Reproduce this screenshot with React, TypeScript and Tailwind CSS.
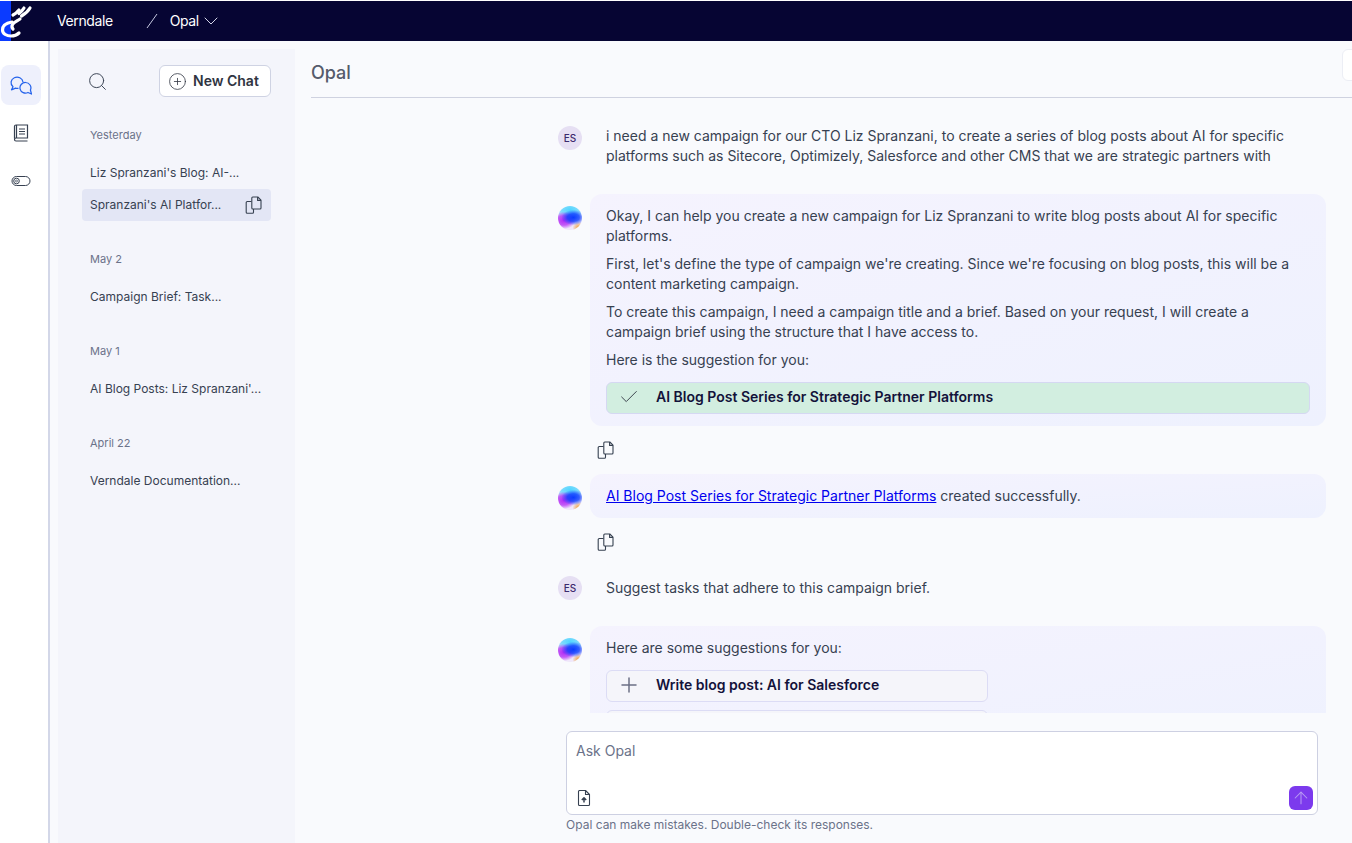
import { ChevronDown, Check, Plus, ArrowUp, Search, CirclePlus } from 'lucide-react';

const CopyIcon = () => (
  <svg width="18" height="18" viewBox="0 0 18 18" fill="none" stroke="#374151" strokeWidth="1.1" strokeLinejoin="round">
    <path d="M6.5 5.5H2.2a1 1 0 0 0-1 1v9.8a1 1 0 0 0 1 1h5.3a1 1 0 0 0 1-1V13" />
    <path d="M6.8 2a1 1 0 0 1 1-1h5l3.2 3.2V12a1 1 0 0 1-1 1H7.8a1 1 0 0 1-1-1z" />
    <path d="M12.6 1v3.4H16" />
  </svg>
);

const ChatsIcon = () => (
  <svg width="22" height="22" viewBox="0 0 22 22" fill="none" stroke="#2563eb" strokeWidth="1.25" strokeLinejoin="round">
    <path d="M13 8A6 5.500 0 1 0 3 12.700L1.500 15.800 5.500 14.200C6.500 14.500 7.500 14.500 8.500 14.400" />
    <path d="M15.500 8.500a5.500 5.300 0 1 0 2.500 10L21.500 20 20.400 16a5.500 5.300 0 0 0-4.900-7.500z" />
  </svg>
);

const BookIcon = () => (
  <svg width="16" height="18" viewBox="0 0 16 18" fill="none" stroke="#374151" strokeWidth="1.2">
    <path d="M1.500 14.500V2.500A1.500 1.500 0 0 1 3 1h11.500v13H3a1.500 1.500 0 0 0-1.500 1.500A1.500 1.500 0 0 0 3 17h11.500" />
    <path d="M3.500 1v13M6 5h6M6 7.500h6M6 10h6" />
  </svg>
);

const ToggleIcon = () => (
  <svg width="20" height="12" viewBox="0 0 20 12" fill="none" stroke="#374151" strokeWidth="1">
    <rect x="1" y="1.500" width="18" height="9" rx="4.500" />
    <circle cx="5.500" cy="6" r="2.800" />
    <circle cx="5.500" cy="6" r="1" strokeWidth="0.700" />
  </svg>
);

const LogoMark = () => (
  <svg width="34" height="38" viewBox="0 0 34 38" fill="none" stroke="#fff" strokeWidth="3.200" strokeLinecap="round">
    <path d="M12 21C6 22 2.500 25 2.500 29c0 4 4.500 6 8.500 6 3 0 6-1 8-3" />
    <path d="M19 9c-1.500 2-4 4-6 5" />
    <path d="M30 7c-2 3.500-5 6-8.500 8" />
    <path d="M24 7c-1.500 2.500-3 4-5 5.500" />
    <path d="M20 18c-3 2-6 3-7.500 5.500-1 2-.5 3.500.5 4.500" />
  </svg>
);

const UploadFileIcon = () => (
  <svg width="14" height="16" viewBox="0 0 14 16" fill="none" stroke="#374151" strokeWidth="1.1" strokeLinejoin="round">
    <path d="M1.500 1.500a1 1 0 0 1 1-1h6l4 4v10a1 1 0 0 1-1 1h-9a1 1 0 0 1-1-1z" />
    <path d="M8.500.5v4h4" />
    <path d="M7 12.500V8M4.800 10L7 7.800 9.200 10" strokeWidth="1.500" />
  </svg>
);

const OpalAvatar = () => (
  <div className="w-6 h-6 rounded-full shrink-0 bg-[#f0e8fb] bg-[radial-gradient(ellipse_50%_32%_at_64%_48%,#0a3cff_0%,rgba(10,60,255,0.8)_50%,transparent_100%),radial-gradient(ellipse_50%_36%_at_24%_60%,#b42cf5_0%,rgba(180,44,245,0.75)_55%,transparent_100%),radial-gradient(ellipse_70%_42%_at_50%_16%,#4fd6ff_0%,rgba(79,214,255,0.7)_50%,transparent_100%),radial-gradient(circle_at_85%_90%,#f0a040_0%,transparent_20%)]" />
);

const UserAvatar = () => (
  <div className="w-6 h-6 rounded-full shrink-0 bg-[#e6dff3] text-[#3b2a6b] text-[10px] font-medium flex items-center justify-center">
    ES
  </div>
);

const groups = [
  { label: 'Yesterday', chats: ["Liz Spranzani's Blog: AI-...", "Spranzani's AI Platfor..."] },
  { label: 'May 2', chats: ['Campaign Brief: Task...'] },
  { label: 'May 1', chats: ["AI Blog Posts: Liz Spranzani'..."] },
  { label: 'April 22', chats: ['Verndale Documentation...'] },
];

const App = () => {
  return (
    <div className="w-[1352px] h-[843px] overflow-hidden bg-[#f9fafd] flex flex-col font-['Inter',sans-serif] text-sm text-[#374151]">
      <header className="h-[41px] shrink-0 border-t border-white bg-[#060533] flex items-center text-white">
        <div className="relative w-[11px] h-full bg-[#0b3bff] shrink-0">
          <div className="absolute left-0 top-0">
            <LogoMark />
          </div>
        </div>
        <span className="ml-[46px] tracking-[-0.4px]">Verndale</span>
        <svg className="ml-[33px]" width="12" height="16" viewBox="0 0 12 16" fill="none" stroke="#c5c8e0" strokeWidth="1">
          <path d="M1 15L11 1" />
        </svg>
        <span className="ml-3 tracking-[-0.4px]">Opal</span>
        <ChevronDown className="text-[#d5d7ea]" size={24} strokeWidth={1} />
      </header>

      <div className="flex-1 flex min-h-0">
        <nav className="w-[50px] shrink-0 bg-white border-r-2 border-[#d3d7e8] flex flex-col items-center pt-6 pr-[7px]">
          <div className="w-10 h-10 rounded-lg bg-[#eef0fc] flex items-center justify-center">
            <ChatsIcon />
          </div>
          <div className="mt-[19px] h-[18px]">
            <BookIcon />
          </div>
          <div className="mt-[33px] h-3">
            <ToggleIcon />
          </div>
        </nav>

        <aside className="w-[237px] ml-2 mt-2 shrink-0 bg-[#f4f5fb] pl-6 pr-6">
          <div className="flex items-center justify-between h-8 mt-4">
            <Search className="ml-[5px] text-[#374151]" size={21} strokeWidth={1.1} />
            <button className="h-8 w-28 rounded-md border border-[#cfd3e3] bg-white flex items-center pl-2 gap-[6px] font-semibold text-[#2f3441]">
              <CirclePlus size={19} strokeWidth={1} />
              New Chat
            </button>
          </div>
          <div className="mt-[30px]">
            {groups.map((group) => (
              <div key={group.label} className="mb-[30px]">
                <div className="px-2 h-4 leading-4 text-[11px] text-[#6b7289]">{group.label}</div>
                <div className="mt-[14px]">
                  {group.chats.map((chat) => {
                    const active = chat.startsWith('Spranzani');
                    return (
                      <div
                        key={chat}
                        className={
                          active
                            ? 'h-8 rounded bg-[#e3e6f5] px-2 flex items-center justify-between text-xs text-[#374151]'
                            : 'h-8 rounded px-2 flex items-center justify-between text-xs text-[#374151]'
                        }
                      >
                        <span>{chat}</span>
                        {active && (
                          <span>
                            <CopyIcon />
                          </span>
                        )}
                      </div>
                    );
                  })}
                </div>
              </div>
            ))}
          </div>
        </aside>

        <main className="flex-1 min-w-0 flex flex-col pl-4">
          <div className="h-[57px] shrink-0 border-b border-[#cfd2e0] relative flex items-center pt-[7px]">
            <h1 className="text-lg font-medium text-[#555b6b]">Opal</h1>
            <div className="absolute right-[-8px] top-2 w-[18px] h-8 rounded-md border border-[#eceef5] bg-white" />
          </div>

          <div className="h-[615px] shrink-0 overflow-hidden pl-[247px] pr-[26px] pt-7">
            <div className="flex gap-6">
              <UserAvatar />
              <p className="leading-5 pr-[30px]">
                i need a new campaign for our CTO Liz Spranzani, to create a series of blog posts about AI for specific platforms such as Sitecore, Optimizely, Salesforce and other CMS that we are strategic partners with
              </p>
            </div>

            <div className="flex gap-2 mt-7">
              <div className="mt-3">
                <OpalAvatar />
              </div>
              <div className="flex-1 rounded-xl bg-linear-to-br from-[#f5f3fe] to-[#eef1fe] px-4 py-3">
                <p className="leading-5">
                  Okay, I can help you create a new campaign for Liz Spranzani to write blog posts about AI for specific platforms.
                </p>
                <p className="leading-5 mt-2">
                  First, let's define the type of campaign we're creating. Since we're focusing on blog posts, this will be a content marketing campaign.
                </p>
                <p className="leading-5 mt-2">
                  To create this campaign, I need a campaign title and a brief. Based on your request, I will create a campaign brief using the structure that I have access to.
                </p>
                <p className="leading-5 mt-2">Here is the suggestion for you:</p>
                <div className="mt-3 h-8 rounded-md border border-[#d5d8f2] bg-[#d2eee0] flex items-center pb-[2px] font-semibold text-[#13123a]">
                  <Check className="ml-[11px] text-[#2f3441]" size={22} strokeWidth={1} />
                  <span className="ml-4">AI Blog Post Series for Strategic Partner Platforms</span>
                </div>
              </div>
            </div>
            <div className="ml-[39px] mt-4 h-4 flex items-center">
              <CopyIcon />
            </div>

            <div className="flex gap-2 mt-4">
              <div className="mt-3">
                <OpalAvatar />
              </div>
              <div className="flex-1 rounded-xl bg-linear-to-br from-[#f5f3fe] to-[#eef1fe] px-4 py-3">
                <p className="leading-5">
                  <a className="text-[#0000ee] underline">AI Blog Post Series for Strategic Partner Platforms</a> created successfully.
                </p>
              </div>
            </div>
            <div className="ml-[39px] mt-4 h-4 flex items-center">
              <CopyIcon />
            </div>

            <div className="flex gap-6 mt-[26px]">
              <UserAvatar />
              <p className="leading-6">Suggest tasks that adhere to this campaign brief.</p>
            </div>

            <div className="flex gap-2 mt-[26px]">
              <div className="mt-3">
                <OpalAvatar />
              </div>
              <div className="flex-1 rounded-t-xl bg-linear-to-br from-[#f5f3fe] to-[#eef1fe] px-4 py-3">
                <p className="leading-5">Here are some suggestions for you:</p>
                <div className="mt-3 w-[382px] h-8 rounded-md border border-[#dcdcf5] bg-[#f5f5fa] flex items-center pb-[2px] font-semibold text-[#13123a]">
                  <Plus className="ml-[10px] text-[#6b6f85]" size={24} strokeWidth={1.5} />
                  <span className="ml-[15px]">Write blog post: AI for Salesforce</span>
                </div>
                <div className="mt-2 w-[382px] h-8 rounded-md border border-[#dcdcf5] bg-[#f5f5fa]" />
              </div>
            </div>
          </div>

          <div className="ml-[255px] mr-[34px] mt-[18px] h-[84px] shrink-0 rounded-md border border-[#cdd0e2] bg-white relative px-[9px] pt-[9px] text-[#6b7289]">
            Ask Opal
            <div className="absolute left-[10px] bottom-[8px]">
              <UploadFileIcon />
            </div>
            <button className="absolute right-[4px] bottom-[4px] w-6 h-6 rounded-md bg-[#7c3aed] flex items-center justify-center">
              <ArrowUp className="text-[#b79bf2]" size={20} strokeWidth={1.25} />
            </button>
          </div>
          <p className="ml-[255px] mt-[2px] text-xs leading-4 text-[#6b7289]">Opal can make mistakes. Double-check its responses.</p>
        </main>
      </div>
    </div>
  );
};

export default App;
